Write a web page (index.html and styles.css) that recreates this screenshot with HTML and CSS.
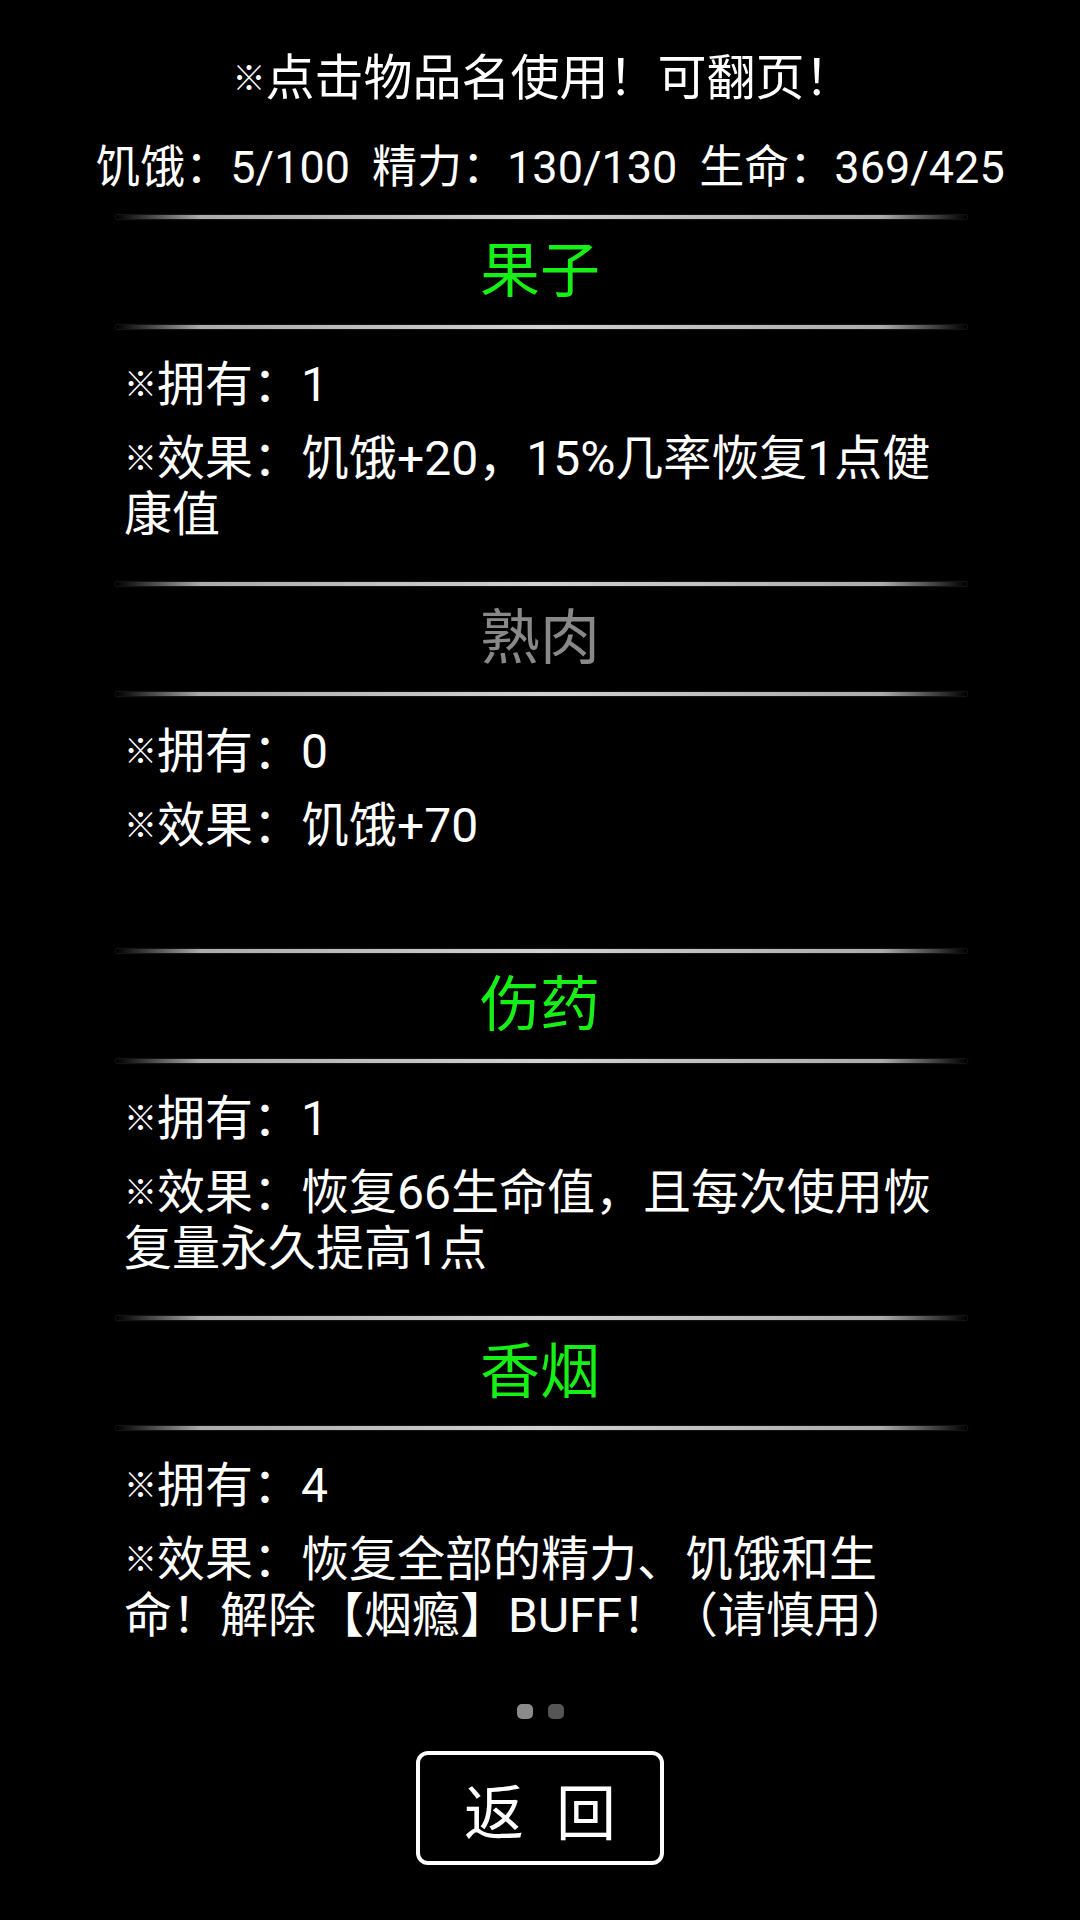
FILE: index.html
```html
<!DOCTYPE html>
<html lang="zh-CN">
<head>
<meta charset="utf-8">
<title>物品</title>
<link rel="stylesheet" href="styles.css">
</head>
<body>
<div class="page">
  <header class="head">
    <div class="title"><span class="mk">※</span>点击物品名使用！可翻页！</div>
    <div class="stats">
      <span>饥饿：5/100</span>
      <span>精力：130/130</span>
      <span>生命：369/425</span>
    </div>
  </header>

  <section class="list">
    <div class="item">
      <div class="sep"></div>
      <div class="name on">果子</div>
      <div class="sep"></div>
      <div class="body">
        <p><span class="mk">※</span>拥有：1</p>
        <p><span class="mk">※</span>效果：饥饿+20，15%几率恢复1点健康值</p>
      </div>
    </div>
    <div class="item">
      <div class="sep"></div>
      <div class="name off">熟肉</div>
      <div class="sep"></div>
      <div class="body">
        <p><span class="mk">※</span>拥有：0</p>
        <p><span class="mk">※</span>效果：饥饿+70</p>
      </div>
    </div>
    <div class="item">
      <div class="sep"></div>
      <div class="name on">伤药</div>
      <div class="sep"></div>
      <div class="body">
        <p><span class="mk">※</span>拥有：1</p>
        <p><span class="mk">※</span>效果：恢复66生命值，且每次使用恢复量永久提高1点</p>
      </div>
    </div>
    <div class="item">
      <div class="sep"></div>
      <div class="name on">香烟</div>
      <div class="sep"></div>
      <div class="body">
        <p><span class="mk">※</span>拥有：4</p>
        <p><span class="mk">※</span>效果：恢复全部的精力、饥饿和生命！解除【烟瘾】BUFF！（请慎用）</p>
      </div>
    </div>
  </section>

  <div class="dots">
    <span class="dot active"></span>
    <span class="dot"></span>
  </div>

  <div class="btn"><span>返</span><span>回</span></div>
</div>
</body>
</html>
```

FILE: styles.css
```css
html, body {
  margin: 0;
  padding: 0;
  background: #000;
}

body {
  width: 1080px;
  height: 1920px;
  overflow: hidden;
  color: #fff;
  font-family: Roboto, "Noto Sans CJK SC", sans-serif;
}

.page {
  display: flex;
  flex-direction: column;
  padding-top: 30px;
}

.head {
  display: flex;
  flex-direction: column;
  align-items: center;
}

.title {
  font-size: 49px;
  line-height: 92px;
  height: 92px;
  text-align: center;
  padding-left: 6px;
}

.stats {
  display: flex;
  justify-content: center;
  gap: 22px;
  font-size: 45px;
  line-height: 92px;
  height: 92px;
  width: 100%;
  box-sizing: border-box;
  padding-left: 20px;
}

.mk {
  font-family: "Noto Sans CJK SC", sans-serif;
  font-size: 33px;
  font-weight: 700;
  vertical-align: 5px;
}

.list {
  margin-top: 1px;
  display: flex;
  flex-direction: column;
}

.item {
  height: 367px;
  display: flex;
  flex-direction: column;
}

.sep {
  height: 4px;
  margin-left: 116px;
  width: 851px;
  background: linear-gradient(90deg,
    rgba(120,120,120,0) 0%,
    rgba(190,190,190,0.9) 10%,
    #d2d2d2 50%,
    rgba(190,190,190,0.9) 90%,
    rgba(120,120,120,0) 100%);
  box-shadow: 0 0 2px rgba(120,120,120,0.6);
}

.name {
  height: 106px;
  line-height: 106px;
  text-align: center;
  font-size: 60px;
}

.name.on { color: #16f016; }
.name.off { color: #888; }

.body {
  padding: 25px 0 0 124px;
  width: 826px;
}

.body p {
  margin: 0 0 15px;
  font-size: 48px;
  line-height: 56px;
}

.dots {
  margin-top: 21px;
  display: flex;
  justify-content: center;
  gap: 15px;
}

.dot {
  width: 16px;
  height: 15px;
  border-radius: 5px;
  background: #555;
}

.dot.active { background: #8a8a8a; }

.btn {
  margin: 32px auto 0;
  width: 248px;
  height: 114px;
  box-sizing: border-box;
  border: 4px solid #fff;
  border-radius: 12px;
  display: flex;
  justify-content: center;
  align-items: center;
  gap: 32px;
  font-size: 60px;
  font-family: "Noto Sans CJK SC", sans-serif;
}
```
